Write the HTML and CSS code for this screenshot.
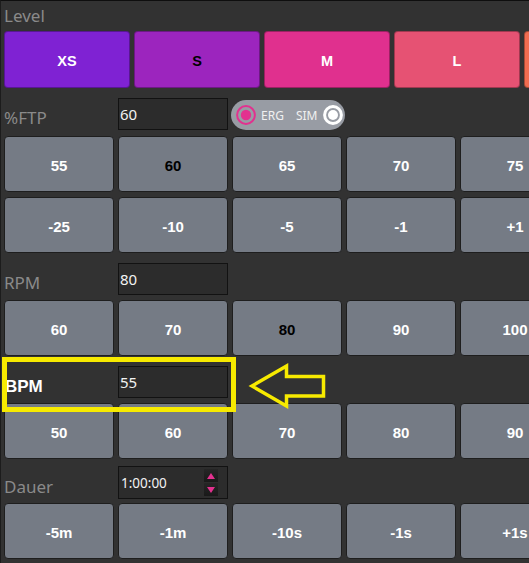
FILE: index.html
```html
<!DOCTYPE html>
<html>
<head>
<meta charset="utf-8">
<link rel="stylesheet" href="styles.css">
</head>
<body>
<div class="app">
  <div class="title-row"><span class="lbl">Level</span></div>
  <div class="levels">
    <div class="lv xs">XS</div>
    <div class="lv s sel">S</div>
    <div class="lv m">M</div>
    <div class="lv l">L</div>
    <div class="lv xl"></div>
  </div>

  <div class="field-row first">
    <span class="lbl">%FTP</span>
    <div class="input">60</div>
    <div class="toggle">
      <svg class="ring" width="20" height="20" viewBox="0 0 20 20"><circle cx="10" cy="10" r="8.9" fill="none" stroke="#e2318f" stroke-width="2"/><circle cx="10" cy="10" r="5.2" fill="#e2318f"/></svg>
      <span class="t-erg">ERG</span>
      <span class="t-sim">SIM</span>
      <svg class="ring" width="20" height="20" viewBox="0 0 20 20"><circle cx="10" cy="10" r="8.4" fill="none" stroke="#ffffff" stroke-width="3"/><circle cx="10" cy="10" r="5" fill="#ffffff"/></svg>
    </div>
  </div>
  <div class="btn-row">
    <div class="gb">55</div>
    <div class="gb sel">60</div>
    <div class="gb">65</div>
    <div class="gb">70</div>
    <div class="gb">75</div>
  </div>
  <div class="btn-row tight">
    <div class="gb">-25</div>
    <div class="gb">-10</div>
    <div class="gb">-5</div>
    <div class="gb">-1</div>
    <div class="gb">+1</div>
  </div>

  <div class="field-row">
    <span class="lbl">RPM</span>
    <div class="input">80</div>
  </div>
  <div class="btn-row tight">
    <div class="gb">60</div>
    <div class="gb">70</div>
    <div class="gb sel">80</div>
    <div class="gb">90</div>
    <div class="gb">100</div>
  </div>

  <div class="field-row bpm-row">
    <span class="lbl strong">BPM</span>
    <div class="input">55</div>
  </div>
  <div class="btn-row tight">
    <div class="gb">50</div>
    <div class="gb">60</div>
    <div class="gb">70</div>
    <div class="gb">80</div>
    <div class="gb">90</div>
  </div>

  <div class="field-row dauer-row">
    <span class="lbl">Dauer</span>
    <div class="input time">
      <span class="time-val">1:00:00</span>
      <div class="spin">
        <div class="spin-btn"><span class="tri up"></span></div>
        <div class="spin-btn"><span class="tri down"></span></div>
      </div>
    </div>
  </div>
  <div class="btn-row last">
    <div class="gb">-5m</div>
    <div class="gb">-1m</div>
    <div class="gb">-10s</div>
    <div class="gb">-1s</div>
    <div class="gb">+1s</div>
  </div>

  <div class="highlight"></div>
  <svg class="arrow" width="82" height="50" viewBox="0 0 82 50">
    <path d="M5 25 L39.5 5 L39.5 15.5 L76.5 15.5 L76.5 35 L39.5 35 L39.5 45 Z" fill="none" stroke="#f7ea00" stroke-width="3.5" stroke-linejoin="miter"/>
  </svg>
</div>
</body>
</html>
```
FILE: styles.css
```css
* { box-sizing: border-box; }
html, body { margin: 0; padding: 0; }
body {
  background: #323232;
  width: 529px;
  height: 563px;
  overflow: hidden;
  font-family: "Noto Sans", "Open Sans", sans-serif;
}
.app {
  position: relative;
  height: 563px;
  border-top: 1px solid #0e0e0e;
  border-left: 1px solid #1c1c1c;
  padding-left: 3px;
  overflow: hidden;
}
.title-row {
  height: 30px;
  padding-top: 3px;
}
.lbl {
  display: block;
  font-size: 17px;
  line-height: 23px;
  color: #8a8a8a;
  white-space: nowrap;
}
.levels {
  display: flex;
  gap: 4px;
  height: 57px;
}
.lv {
  flex: 0 0 126px;
  border-radius: 4px;
  border: 1px solid rgba(0, 0, 0, 0.3);
  display: flex;
  align-items: center;
  justify-content: center;
  padding-top: 3px;
  font-family: "Liberation Sans", Arial, sans-serif;
  font-weight: bold;
  font-size: 14.5px;
  color: #ffffff;
}
.lv.xs { background: #7f22d3; }
.lv.s { background: #9c25be; }
.lv.m { background: #e0308e; }
.lv.l { background: #e65273; }
.lv.xl { background: #f06c50; }
.lv.sel, .gb.sel { color: #000000; }

.field-row {
  display: flex;
  align-items: center;
  height: 32px;
  margin-top: 10px;
}
.field-row.first { margin-top: 10px; }
.field-row.dauer-row { margin-top: 7px; height: 33px; }
.field-row .lbl {
  width: 114px;
  flex: 0 0 114px;
  align-self: flex-end;
  margin-bottom: 1px;
}
.field-row .lbl.strong {
  font-family: "Liberation Sans", Arial, sans-serif;
  font-weight: bold;
  color: #ffffff;
  font-size: 17px;
  line-height: 20px;
  margin-bottom: 1px;
  padding-left: 1px;
}
.input {
  width: 110px;
  height: 100%;
  flex: 0 0 110px;
  background: #2c2c2c;
  border: 1px solid #121212;
  color: #f2f2f2;
  font-size: 15px;
  padding-left: 1px;
  display: flex;
  align-items: center;
}
.input.time {
  font-size: 13.5px;
  padding-left: 2px;
  padding-right: 9px;
  justify-content: space-between;
}
.spin {
  display: flex;
  flex-direction: column;
  gap: 1px;
}
.spin-btn {
  width: 14px;
  height: 13px;
  background: linear-gradient(#262626, #191919);
  display: flex;
  align-items: center;
  justify-content: center;
}
.tri {
  width: 0;
  height: 0;
  border-left: 4.5px solid transparent;
  border-right: 4.5px solid transparent;
}
.tri.up { border-bottom: 6px solid #e2318f; }
.tri.down { border-top: 6px solid #e2318f; }

.toggle {
  align-self: flex-start;
  margin-top: 2px;
  margin-left: 3px;
  height: 30px;
  width: 114px;
  border-radius: 15px;
  background: #989ca4;
  display: flex;
  align-items: center;
  padding-left: 5px;
  font-size: 12px;
  color: #f0f0f0;
}
.ring { display: block; flex: 0 0 auto; }
.t-erg { margin-left: 5px; }
.t-sim { margin-left: 12px; margin-right: 6px; }

.btn-row {
  display: flex;
  gap: 4px;
  margin-top: 6px;
}
.btn-row.tight { margin-top: 5px; }
.btn-row.last { margin-top: 4px; }
.gb {
  flex: 0 0 110px;
  height: 56px;
  background: #757b85;
  border: 1px solid #1e1e1e;
  border-radius: 4px;
  display: flex;
  align-items: center;
  justify-content: center;
  padding-top: 2px;
  font-family: "Liberation Sans", Arial, sans-serif;
  font-weight: bold;
  font-size: 15px;
  color: #ffffff;
}

.highlight {
  position: absolute;
  left: 1px;
  top: 356px;
  width: 234px;
  height: 55px;
  border: 5px solid #f7ea00;
}
.arrow {
  position: absolute;
  left: 246px;
  top: 360px;
}
```
